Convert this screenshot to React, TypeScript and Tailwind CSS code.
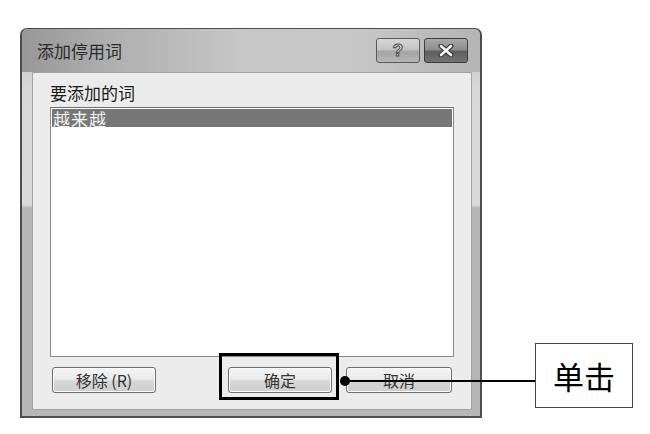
import React from 'react';

const cjk = { fontFamily: '"Noto Sans CJK SC", "Liberation Sans", sans-serif' };

function WinButton({ label, className }: { label: string; className: string }) {
  return (
    <div
      className={`flex h-[26px] items-center justify-center rounded-[3px] border border-[#707070] bg-[linear-gradient(180deg,#f4f4f4_0%,#ebebeb_45%,#d6d6d6_55%,#cfcfcf_100%)] text-[16px] leading-none text-[#333333] shadow-[inset_0_0_0_1px_#fbfbfb] ${className}`}
    >
      {label}
    </div>
  );
}

export default function App() {
  return (
    <div className="relative h-[434px] w-[650px] overflow-hidden bg-white" style={cjk}>
      {/* dialog window */}
      <div className="ml-[20px] mt-[28px] flex h-[390px] w-[462px] flex-col rounded-t-[7px] border-2 border-t border-[#4d4d4d] bg-[linear-gradient(180deg,#c4c4c4_0px,#d8d8d8_60px,#dadada_176px,#b6b6b6_179px,#b6b6b6_100%)]">
        {/* title bar */}
        <div className="flex h-[43px] items-center rounded-t-[6px] bg-[linear-gradient(90deg,#989898_0%,#b0b0b0_20%,#c8c8c8_50%,#c6c6c6_75%,#b4b4b4_100%)] pl-[15px] pr-[12px]">
          <span className="text-[17px] leading-none text-[#2a2a2a]">添加停用词</span>
          <div className="ml-auto flex gap-[4px]">
            <div className="flex h-[25px] w-[44px] items-center justify-center rounded-[3px] border border-[#5a5a5a] bg-[linear-gradient(180deg,#d6d6d6_0%,#c4c4c4_45%,#a4a4a4_55%,#b6b6b6_100%)]">
              <span className="text-[17px] font-bold leading-none text-[#e4e4e4] [-webkit-text-stroke:1px_#4a4a4a]" style={{ fontFamily: '"Liberation Sans", sans-serif' }}>
                ?
              </span>
            </div>
            <div className="flex h-[25px] w-[44px] items-center justify-center rounded-[3px] border border-[#3c3c3c] bg-[linear-gradient(180deg,#a8a8a8_0%,#8e8e8e_45%,#5e5e5e_55%,#747474_100%)]">
              <svg width="18" height="13" viewBox="0 0 18 13">
                <path d="M4 2 L14 11 M14 2 L4 11" stroke="#3a3a3a" strokeWidth="5" strokeLinecap="round" />
                <path d="M4 2 L14 11 M14 2 L4 11" stroke="#f2f2f2" strokeWidth="2.6" strokeLinecap="round" />
              </svg>
            </div>
          </div>
        </div>

        {/* client area */}
        <div className="mb-[6px] ml-[10px] mr-[8px] flex flex-1 flex-col border border-[#a2a2a2] bg-[#ececec] pl-[17px]">
          <div className="mt-[10px] text-[17px] leading-[20px] text-[#1a1a1a]">要添加的词</div>
          <div className="mt-[4px] h-[250px] w-[404px] border border-[#8a8a8a] border-t-[#6e6e6e] bg-white p-[1px]">
            <div className="flex h-[18px] items-center bg-[#777777] pl-[1px] text-[17px] leading-none tracking-[1px] text-[#f4f4f4]">
              越来越
            </div>
          </div>
          <div className="ml-[2px] mt-[10px] flex">
            <WinButton label="移除 (R)" className="w-[104px]" />
            <WinButton label="确定" className="ml-[72px] w-[104px]" />
            <WinButton label="取消" className="ml-[14px] w-[106px]" />
          </div>
        </div>
      </div>

      {/* annotation overlay */}
      <div className="absolute left-[219px] top-[353px] h-[47px] w-[120px] border-[3px] border-black" />
      <div className="absolute left-[345px] top-[380px] h-[2px] w-[190px] bg-black" />
      <div className="absolute left-[340px] top-[376px] h-[10px] w-[10px] rounded-full bg-black" />
      <div className="absolute left-[535px] top-[343px] flex h-[65px] w-[98px] items-center justify-center border border-[#444] bg-white text-[31px] leading-none text-black">
        单击
      </div>
    </div>
  );
}
